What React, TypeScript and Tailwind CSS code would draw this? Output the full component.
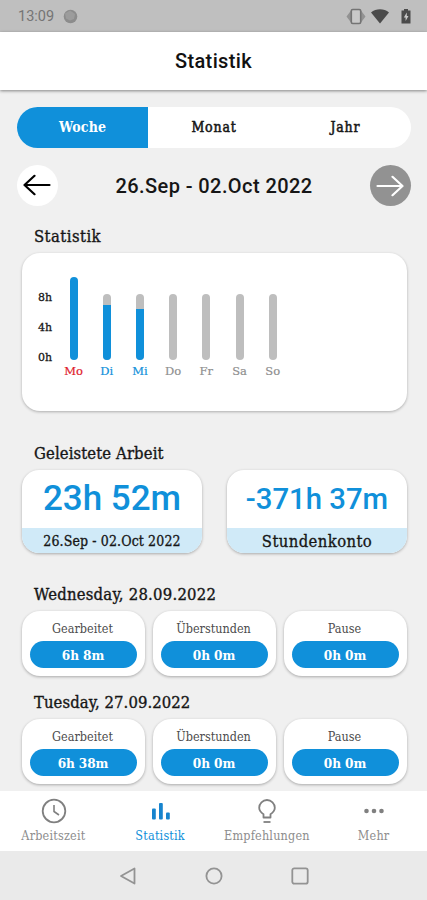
import React, { useState } from "react";
import clsx from "clsx";

const slab =
  "font-['Roboto_Slab','DejaVu_Serif_Condensed','DejaVu_Serif',serif] [font-stretch:condensed] whitespace-nowrap";

const ranges = ["Woche", "Monat", "Jahr"];

const bars = [
  { day: "Mo", height: 83, worked: 83, color: "text-[#e0202c]" },
  { day: "Di", height: 66, worked: 55, color: "text-[#1090da]" },
  { day: "Mi", height: 66, worked: 51, color: "text-[#1090da]" },
  { day: "Do", height: 66, worked: 0, color: "text-[#8f8f8f]" },
  { day: "Fr", height: 66, worked: 0, color: "text-[#8f8f8f]" },
  { day: "Sa", height: 66, worked: 0, color: "text-[#8f8f8f]" },
  { day: "So", height: 66, worked: 0, color: "text-[#8f8f8f]" },
];

const days = [
  {
    title: "Wednesday, 28.09.2022",
    values: [
      { label: "Gearbeitet", value: "6h 8m" },
      { label: "Überstunden", value: "0h 0m" },
      { label: "Pause", value: "0h 0m" },
    ],
  },
  {
    title: "Tuesday, 27.09.2022",
    values: [
      { label: "Gearbeitet", value: "6h 38m" },
      { label: "Überstunden", value: "0h 0m" },
      { label: "Pause", value: "0h 0m" },
    ],
  },
];

const StatusBar = () => (
  <div className="flex h-8 shrink-0 items-center justify-between bg-[#bfbfbf] pl-[18px] pr-4">
    <div className="flex items-center gap-[9px]">
      <span className="pt-px text-[14.5px] leading-8 text-[#757575]">13:09</span>
      <svg width="15" height="15" viewBox="0 0 15 15">
        <circle cx="7.5" cy="7.5" r="6.8" fill="#8c8c8c" />
        <path d="M2 4.5 7 1.5l5 3.5-1 5-4 1.5-4-2z" fill="#9c9c9c" />
      </svg>
    </div>
    <div className="flex items-center">
      <svg width="20" height="17" viewBox="0 0 20 17">
        <path d="M5 2.5v12L.5 8.5zM15 2.5v12l4.500-6z" fill="#929292" />
        <rect x="5.3" y="1.5" width="9.4" height="14" rx="1.5" fill="#c9c9c9" stroke="#747474" strokeWidth="1.6" />
      </svg>
      <svg className="ml-[5px]" width="18" height="15" viewBox="0 0 18 15">
        <path d="M0 3.5C5-.7 13-.7 18 3.5L9 14.5z" fill="#4b4b4b" />
      </svg>
      <svg className="ml-3" width="10" height="15" viewBox="0 0 10 15">
        <path d="M3 0h4v1.5h2.5v13h-9v-13H3z" fill="#4b4b4b" />
        <path d="M5.8 3.5 2.8 8.4h1.8v3.6l2.9-5H5.8z" fill="#c9c9c9" />
      </svg>
    </div>
  </div>
);

const ArrowIcon = () => (
  <svg width="28" height="22" viewBox="0 0 28 22" fill="none" stroke="currentColor" strokeWidth="2.2" strokeLinecap="round" strokeLinejoin="round">
    <path d="M1.5 11h25M16.5 1.8 26.5 11l-10 9.2" />
  </svg>
);

const Heading = ({ text, className }: { text: string; className?: string }) => (
  <h2
    className={clsx(
      slab,
      "h-6 pl-3 text-[16.5px] leading-6 text-[#161616] [-webkit-text-stroke:0.35px]",
      className
    )}
  >
    {text}
  </h2>
);

const Chart = () => (
  <div className="mt-1 flex h-[158px] rounded-[18px] bg-white pl-4 shadow-[0_1px_3px_rgba(0,0,0,0.28)]">
    <div className="mt-[30px] w-[19px] whitespace-nowrap font-['Roboto_Slab','DejaVu_Serif',serif] text-[11px] text-[#161616] [-webkit-text-stroke:0.3px]">
      <div className="h-[30px] leading-[30px]">8h</div>
      <div className="h-[30px] leading-[30px]">4h</div>
      <div className="h-[30px] leading-[30px]">0h</div>
    </div>
    <div className="flex pt-[22.5px]">
      {bars.map((bar) => (
        <div key={bar.day} className="flex w-[33.2px] flex-col items-center">
          <div className="flex h-[84px] items-end">
            <div
              className="flex w-2 items-end overflow-hidden rounded-full bg-[#bebebe]"
              style={{ height: bar.height }}
            >
              <div className="w-full bg-[#1090da]" style={{ height: bar.worked }} />
            </div>
          </div>
          <span
            className={clsx(
              "mt-[2px] whitespace-nowrap font-['Roboto_Slab','DejaVu_Serif',serif] text-[11.5px] leading-[18px] [-webkit-text-stroke:0.2px]",
              bar.color
            )}
          >
            {bar.day}
          </span>
        </div>
      ))}
    </div>
  </div>
);

const Total = ({
  value,
  label,
  valueClass,
  labelClass,
}: {
  value: string;
  label: string;
  valueClass: string;
  labelClass: string;
}) => (
  <div className="flex h-[83px] w-[180px] flex-col overflow-hidden rounded-[17px] bg-white text-center shadow-[0_1px_3px_rgba(0,0,0,0.3)]">
    <div className={clsx("h-[58px] whitespace-nowrap font-medium leading-[58px] text-[#1090da]", valueClass)}>
      {value}
    </div>
    <div className={clsx(slab, "h-[25px] bg-[#d0eaf8] leading-[27px] text-[#161616] [-webkit-text-stroke:0.3px]", labelClass)}>
      {label}
    </div>
  </div>
);

const DayCards = ({ values }: { values: { label: string; value: string }[] }) => (
  <div className="mt-1 flex justify-between">
    {values.map((item) => (
      <div
        key={item.label}
        className="flex h-[65px] w-[123px] flex-col items-center rounded-[18px] bg-white pt-2 shadow-[0_1px_3px_rgba(0,0,0,0.3)]"
      >
        <span className={clsx(slab, "pr-[2px] text-[12.5px] leading-[20px] text-[#4c4c4c]")}>{item.label}</span>
        <div className={clsx(slab, "mt-[2px] h-[27px] w-[107px] rounded-full bg-[#1090da] pr-px text-center text-[13.5px] font-bold leading-[28px] tracking-[-0.1px] text-white")}>
          {item.value}
        </div>
      </div>
    ))}
  </div>
);

const tabs = [
  {
    label: "Arbeitszeit",
    icon: (
      <g fill="none" stroke="#808080">
        <circle cx="14" cy="14" r="11.3" strokeWidth="1.8" />
        <path d="M14 8v6.5l5 3.5" strokeWidth="1.6" />
      </g>
    ),
  },
  {
    label: "Statistik",
    icon: (
      <g fill="#1784ce">
        <rect x="5" y="11.5" width="3.8" height="11" rx="1" />
        <rect x="12" y="6" width="3.8" height="16.5" rx="1" />
        <rect x="19" y="15.5" width="3.8" height="7" rx="1" />
      </g>
    ),
  },
  {
    label: "Empfehlungen",
    icon: (
      <g fill="none" stroke="#808080" strokeWidth="1.8">
        <path d="M10.5 20.5v-3.2C7.8 15.5 6.2 13.5 6.2 10.8a7.8 7.8 0 0 1 15.6 0c0 2.7-1.6 4.7-4.3 6.5v3.2z" strokeLinejoin="round" />
        <path d="M10.5 25h7" />
      </g>
    ),
  },
  {
    label: "Mehr",
    icon: (
      <g fill="#808080">
        <circle cx="6.5" cy="14" r="2.3" />
        <circle cx="14" cy="14" r="2.3" />
        <circle cx="21.5" cy="14" r="2.3" />
      </g>
    ),
  },
];

const TabBar = () => (
  <nav className="grid h-[60px] shrink-0 grid-cols-4 bg-white pt-[6px]">
    {tabs.map((tab) => (
      <div key={tab.label} className="flex flex-col items-center">
        <svg className="ml-px" width="28" height="28" viewBox="0 0 28 28">
          {tab.icon}
        </svg>
        <span
          className={clsx(
            slab,
            "mt-[1px] text-[12.5px] leading-[20px] tracking-[0.2px]",
            tab.label === "Statistik" ? "text-[#1090da]" : "text-[#8d8d8d]"
          )}
        >
          {tab.label}
        </span>
      </div>
    ))}
  </nav>
);

const SystemBar = () => (
  <div className="flex h-[49px] shrink-0 items-center justify-center gap-[66px] bg-[#eaeaea] text-[#939393]">
    <svg width="20" height="20" viewBox="0 0 20 20" fill="none" stroke="currentColor" strokeWidth="1.8" strokeLinejoin="round">
      <path d="M16.5 2.5v15L3 10z" />
    </svg>
    <svg width="20" height="20" viewBox="0 0 20 20" fill="none" stroke="currentColor" strokeWidth="1.8">
      <circle cx="10" cy="10" r="7.6" />
    </svg>
    <svg width="20" height="20" viewBox="0 0 20 20" fill="none" stroke="currentColor" strokeWidth="1.8">
      <rect x="2.3" y="2.3" width="15.4" height="15.4" rx="2" />
    </svg>
  </div>
);

const App = () => {
  const [range, setRange] = useState("Woche");

  return (
    <div className="flex h-[900px] w-[427px] flex-col overflow-hidden bg-[#f0f0f0] font-['Roboto',sans-serif]">
      <StatusBar />
      <header className="h-[58px] shrink-0 bg-white text-center text-[20px] font-medium leading-[58px] tracking-[0.35px] text-[#111] shadow-[0_1px_3px_rgba(0,0,0,0.45)]">
        Statistik
      </header>
      <main className="min-h-0 flex-1 overflow-hidden pt-[17px]">
        <div className="ml-[17px] mr-4 flex h-[41px] overflow-hidden rounded-full bg-white">
          {ranges.map((name) => (
            <button
              key={name}
              onClick={() => setRange(name)}
              className={clsx(
                slab,
                "flex-1 text-[14px]",
                range === name
                  ? "bg-[#1090da] font-bold tracking-[0.2px] text-white"
                  : "tracking-[0.8px] text-[#161616] [-webkit-text-stroke:0.5px]"
              )}
            >
              {name}
            </button>
          ))}
        </div>
        <div className="ml-[17px] mr-4 mt-[17px] flex h-[41px] items-center justify-between">
          <button className="flex size-[41px] rotate-180 items-center justify-center rounded-full bg-white text-black">
            <ArrowIcon />
          </button>
          <span className="text-[20px] font-medium tracking-[0.42px] text-[#161616]">26.Sep - 02.Oct 2022</span>
          <button className="flex size-[41px] items-center justify-center rounded-full bg-[#929292] text-white">
            <ArrowIcon />
          </button>
        </div>
        <div className="ml-[22px] mr-5 mt-[19px]">
          <Heading text="Statistik" className="tracking-[0.45px]" />
          <Chart />
          <Heading text="Geleistete Arbeit" className="mt-[31px] tracking-[0.12px]" />
          <div className="mt-1 flex justify-between">
            <Total value="23h 52m" label="26.Sep - 02.Oct 2022" valueClass="text-[35px]" labelClass="text-[14px] tracking-[0.12px]" />
            <Total value="-371h 37m" label="Stundenkonto" valueClass="text-[29.3px]" labelClass="text-[16.5px] tracking-[0.4px]" />
          </div>
          {days.map((day, i) => (
            <div key={day.title}>
              <Heading
                text={day.title}
                className={i === 0 ? "mt-[30px] tracking-[0.24px]" : "mt-[15px] tracking-[0.08px]"}
              />
              <DayCards values={day.values} />
            </div>
          ))}
        </div>
      </main>
      <TabBar />
      <SystemBar />
    </div>
  );
};

export default App;
